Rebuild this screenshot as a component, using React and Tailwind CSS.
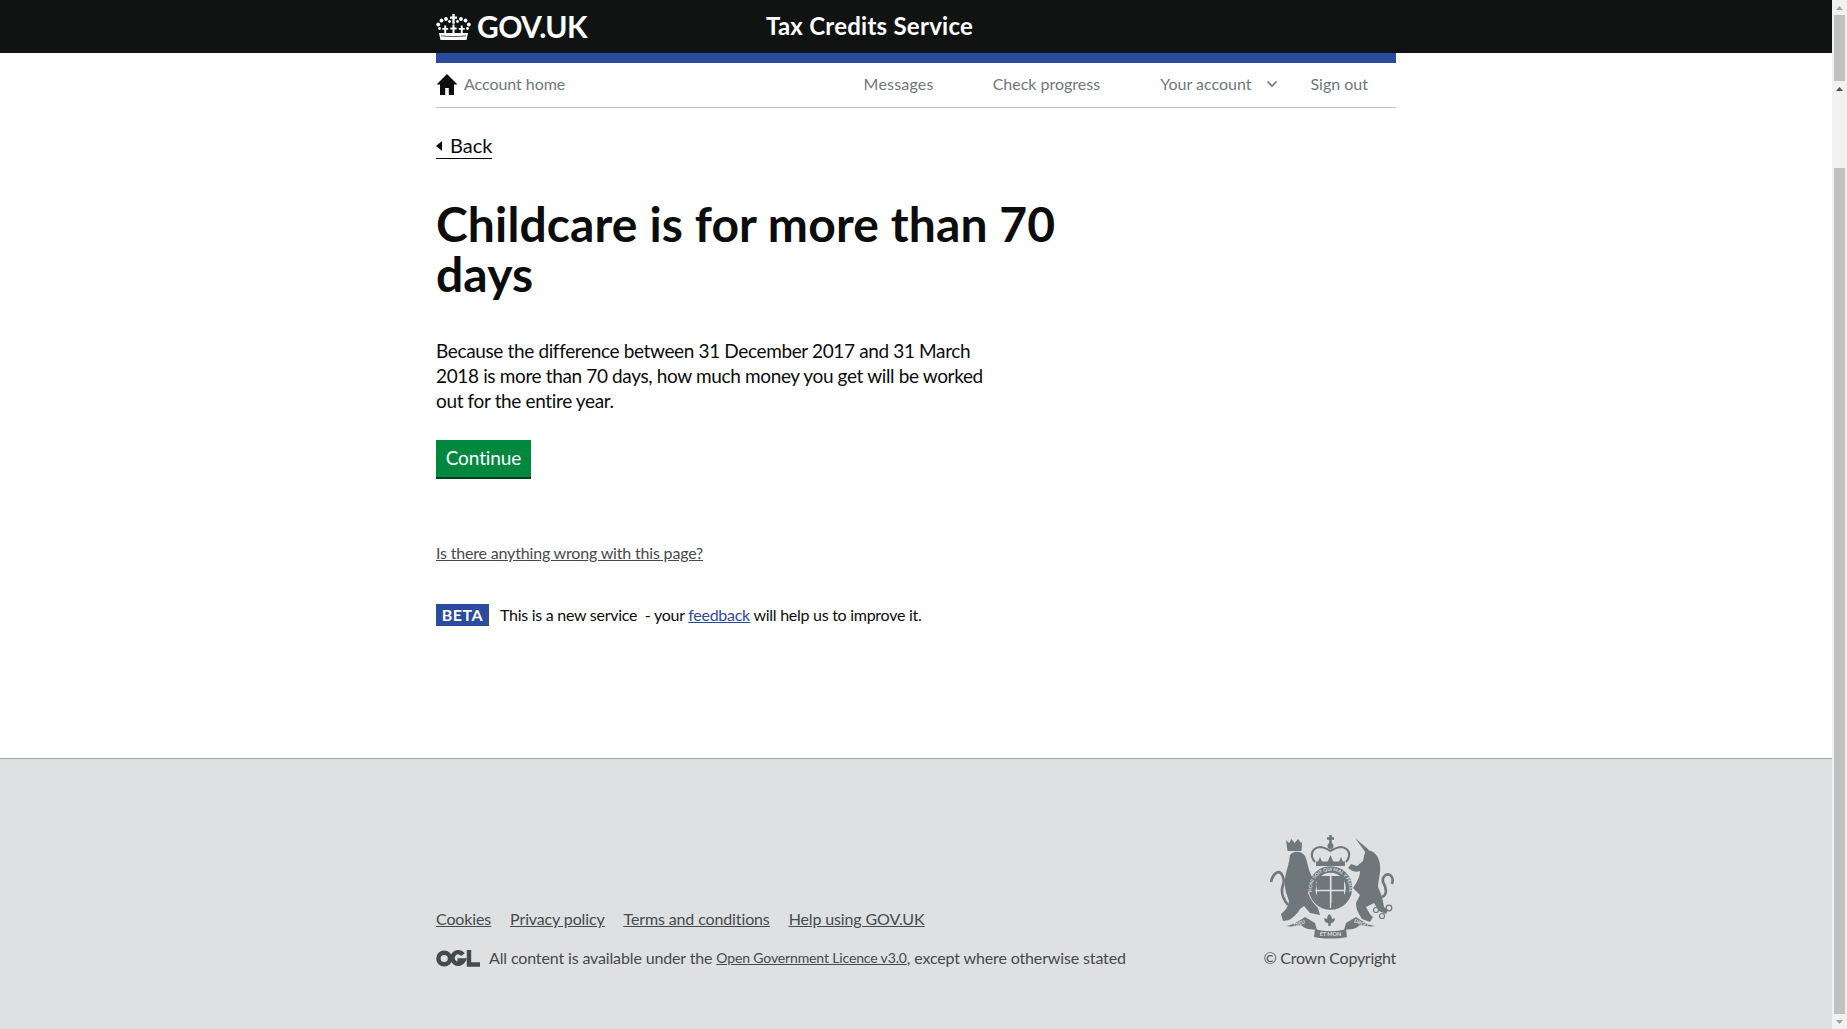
import React from "react";

const Crown = () => (
  <svg width="35" height="26" viewBox="0 0 35 26" className="shrink-0">
    <g fill="#fff">
      <path d="M16.300 0h2.400v2.500h2.300v2.300h-2.300v5h-2.400v-5H14V2.500h2.300z" />
      <circle cx="2.200" cy="10.500" r="1.900" /><circle cx="32.800" cy="10.500" r="1.900" />
      <circle cx="5.500" cy="6.500" r="1.900" /><circle cx="29.500" cy="6.500" r="1.900" />
      <circle cx="10" cy="5" r="1.900" /><circle cx="25" cy="5" r="1.900" />
      <circle cx="13.500" cy="7.500" r="1.400" /><circle cx="21.500" cy="7.500" r="1.400" />
      <circle cx="3.500" cy="14.500" r="1.400" /><circle cx="31.500" cy="14.500" r="1.400" />
      <path d="M8.300 11.500h1.900v2.500h2v1.800h-2v4h-1.900v-4h-2V14h2z" />
      <path d="M16.500 10.500h2v3h2.200v1.900h-2.200v4.100h-2v-4.100h-2.200v-1.900h2.200z" />
      <path d="M24.800 11.500h1.900V14h2v1.800h-2v4h-1.900v-4h-2V14h2z" />
      <path d="M3 19h29l-1.500 7h-26z" />
    </g>
    <path d="M5 21.800c8 1 17 1 25 0" fill="none" stroke="#111313" strokeWidth="0.700" />
  </svg>
);

const Home = () => (
  <svg width="22" height="21" viewBox="0 0 22 21" className="shrink-0">
    <path d="M11 0L0.500 10.500H4V21h5.200v-7h3.600v7H18V10.500h3.500z" fill="#0b0c0c" />
  </svg>
);

const Ogl = () => (
  <svg width="44" height="17" viewBox="0 0 44 17" className="shrink-0">
    <g fill="none" stroke="#454a4c" strokeWidth="4.400">
      <circle cx="8.200" cy="8.500" r="5.800" />
      <path d="M27 4.600A5.800 5.800 0 1 0 27.500 10.500H21.500" />
      <path d="M33 0v14.500h11" />
    </g>
  </svg>
);

const Crest = () => (
  <svg width="126" height="104" viewBox="0 0 126 104" className="shrink-0">
    <defs>
      <path id="garter-arc" d="M42.500 60A18.800 18.800 0 1 1 78.500 60" />
    </defs>
    <g fill="#6f777b">
      {/* lion */}
      <path d="M20 20C24 15 32 16 35 21C38 28 38 34 41 40L47 49L46 55L41 50L38 58C40 64 44 69 48 73L50 80L40 78L34 71L30 74C27 79 24 82 19 85L13 86L11 79C15 76 18 72 19 66C16 58 14 52 15 44C16 36 19 30 20 20z" />
      <path d="M16 5l3 3 2.500-4 3 4 3.500-4 3 4 1-1-.5 9H17.500z" />
      {/* unicorn */}
      <path d="M85 3L99 15L96 18z" />
      <path d="M96 16C102 14 109 20 110 30C111 38 108 46 108 52C112 60 113 66 114 72L118 75L116 79L109 76L104 68L96 72C98 76 100 80 103 82L100 87L92 84C88 78 86 74 86 68L90 60L83 53C87 47 90 42 90 36C86 38 82 36 78 33L81 29L87 31L93 26C94 22 94 19 96 16z" />
      {/* centre crown */}
      <path d="M46 26.500h29v4.500H46z" />
      <path d="M48 27l2-5 2 5zM57.500 27l3-7 3 7zM69 27l2-5 2 5z" />
      <circle cx="60.500" cy="11" r="3" />
      {/* fleur */}
      <path d="M59 79c2 1 3 3 3 5l3-1c0 3-2 5-4 5l-.5 3h-2l-.5-3c-2 0-4-2-4-5l3 1c0-2 1-4 2-5z" />
      {/* ribbons */}
      <path d="M16 91c7-1 13-5 19-9l10 6 2 7-9-1c-3-1-5-2-7-4-5 1-10 2-15 1z" />
      <path d="M105 91c-7-1-13-5-19-9l-10 6-2 7 9-1c3-1 5-2 7-4 5 1 10 2 15 1z" />
      <path d="M45 94c10 3 21 3 31 0l1 8c-10 2-23 2-33 0z" />
      {/* shield quarters */}
      <path d="M47 41h13v14H47zM61.500 56H74v4c0 3-1.500 6-3 8l-9.500 5zM47 56h13v17c-6-2-13-7-13-14zM61.500 41H74v14H61.500z" />
    </g>
    <g fill="none" stroke="#6f777b">
      <path d="M18 70C13 64 10 58 13 50C15 44 12 38 9 37C5 37 2 42 1 47" strokeWidth="2.600" />
      <path d="M112 62C118 60 116 52 113 47C112 42 116 38 120 40C123 42 123 46 122 49" strokeWidth="2.600" />
      <path d="M45 27C39 20 42 13 50 12C54 12 57 14 60.500 16C64 14 67 12 71 12C79 13 82 20 76 27" strokeWidth="2.200" />
      <path d="M60.500 0V9M57 3.500H64" strokeWidth="2.600" />
      <circle cx="106" cy="75" r="2.500" strokeWidth="1.200" />
      <circle cx="112" cy="81" r="2.500" strokeWidth="1.200" />
      <circle cx="119" cy="73" r="2.800" strokeWidth="1.200" />
      <circle cx="60.500" cy="53" r="18.500" strokeWidth="6.500" />
    </g>
    <path d="M60.500 41V73M47 55.500H74" stroke="#dee0e2" strokeWidth="1.300" />
    <g fontFamily="Lato, sans-serif" fontWeight="700" fill="#dee0e2" textAnchor="middle">
      <text fontSize="4.600">
        <textPath href="#garter-arc" startOffset="50%">HONI SOIT QUI MAL Y PENSE</textPath>
      </text>
      <text x="60.500" y="100.500" fontSize="5.500">ET MON</text>
      <text x="30" y="90" fontSize="5" transform="rotate(-20 30 90)">DIEU</text>
      <text x="91" y="90" fontSize="5" transform="rotate(20 91 90)">DROIT</text>
    </g>
  </svg>
);

const Arrow = ({ down, dark }) => (
  <div className="flex h-[15px] w-[15px] items-center justify-center">
    <svg width="7" height="4" viewBox="0 0 7 4">
      <path d={down ? "M0 0h7L3.500 4z" : "M0 4h7L3.500 0z"} fill={dark ? "#505050" : "#a3a3a3"} />
    </svg>
  </div>
);

const Scrollbar = () => (
  <div className="flex h-[1029px] w-[15px] shrink-0 flex-col bg-[#f1f1f1]">
    <Arrow />
    <div className="mx-auto h-[66px] w-[11px] bg-[#c1c1c1]" />
    <Arrow dark />
    <div className="h-[72px]" />
    <div className="mx-auto h-[846px] w-[11px] bg-[#c1c1c1]" />
    <Arrow down />
  </div>
);

export default function App() {
  return (
    <div className="flex h-[1029px] w-full overflow-hidden bg-white font-['Lato',sans-serif] text-[#0b0c0c]">
      <div className="flex min-w-0 flex-1 flex-col">
        <header className="h-[53px] shrink-0 bg-[#111313]">
          <div className="mx-auto flex h-full w-[960px] items-center">
            <Crown />
            <span className="ml-[6px] -translate-y-px text-[30px] font-bold leading-none tracking-[-0.6px] text-white">GOV.UK</span>
            <span className="ml-[179px] -translate-y-px text-[24px] font-bold leading-none tracking-[0.25px] text-white">Tax Credits Service</span>
          </div>
        </header>
        <main className="mx-auto flex w-[960px] flex-1 flex-col">
          <div className="h-[10px] bg-[#2b4c9c]" />
          <nav className="flex h-[45px] items-center border-b border-[#bfc1c3] pb-[2px] text-[16px] text-[#6f777b]">
            <Home />
            <span className="ml-[6px] tracking-[-0.05px]">Account home</span>
            <span className="ml-auto tracking-[0.2px]">Messages</span>
            <span className="ml-[59px]">Check progress</span>
            <span className="ml-[60px]">Your account</span>
            <svg width="12" height="8" viewBox="0 0 12 8" className="ml-[15px]">
              <path d="M1.500 1.500L6 6l4.500-4.500" fill="none" stroke="#6f777b" strokeWidth="1.600" />
            </svg>
            <span className="ml-[32px] mr-[28px]">Sign out</span>
          </nav>
          <a className="mt-[25px] flex w-fit items-center gap-[8px] border-b border-[#0b0c0c] text-[20px] leading-[25px]">
            <span className="h-0 w-0 border-y-[5px] border-r-[6px] border-y-transparent border-r-[#0b0c0c]" />
            Back
          </a>
          <h1 className="mt-[40px] w-[700px] text-[48px] font-bold leading-[50px] tracking-[0.12px]">
            Childcare is for more than 70 days
          </h1>
          <p className="mt-[39px] w-[560px] text-[19px] leading-[25px] tracking-[-0.36px]">
            Because the difference between 31 December 2017 and 31 March 2018 is more than 70 days, how much money you get will be worked out for the entire year.
          </p>
          <button className="mt-[27px] h-[39px] w-[95px] border-b-2 border-[#00401e] bg-[#00883f] text-[19px] tracking-[-0.1px] text-white">
            Continue
          </button>
          <a className="mt-[64px] w-fit text-[16px] leading-[20px] tracking-[-0.18px] text-[#454a4c] underline">Is there anything wrong with this page?</a>
          <div className="mt-[40px] flex items-center text-[16px] tracking-[-0.27px]">
            <span className="flex h-[22px] w-[53px] items-center justify-center bg-[#2b4c9c] text-[16px] font-bold tracking-[0.5px] text-white">BETA</span>
            <span className="ml-[11px] whitespace-pre">This is a new service  - your </span>
            <a className="text-[#2b4c9c] underline">feedback</a>
            <span className="whitespace-pre"> will help us to improve it.</span>
          </div>
        </main>
        <footer className="flex h-[271px] shrink-0 border-t border-[#a1acb2] bg-[#dee0e2] text-[#454a4c]">
          <div className="mx-auto flex h-full w-[960px] items-start justify-between pt-[76px]">
            <div className="pt-[74px]">
              <div className="flex gap-[19px] text-[16px] leading-[20px] tracking-[-0.13px] underline">
                <a>Cookies</a><a>Privacy policy</a><a>Terms and conditions</a><a>Help using GOV.UK</a>
              </div>
              <div className="mt-[19px] flex items-center text-[16px] leading-[20px] tracking-[-0.14px]">
                <Ogl />
                <span className="ml-[9px] whitespace-pre">All content is available under the </span>
                <a className="text-[14px] underline">Open Government Licence v3.0</a>
                <span className="whitespace-pre">, except where otherwise stated</span>
              </div>
            </div>
            <div className="flex flex-col items-end">
              <Crest />
              <span className="mt-[9px] text-[16px] leading-[20px] tracking-[-0.28px]">© Crown Copyright</span>
            </div>
          </div>
        </footer>
      </div>
      <Scrollbar />
    </div>
  );
}
